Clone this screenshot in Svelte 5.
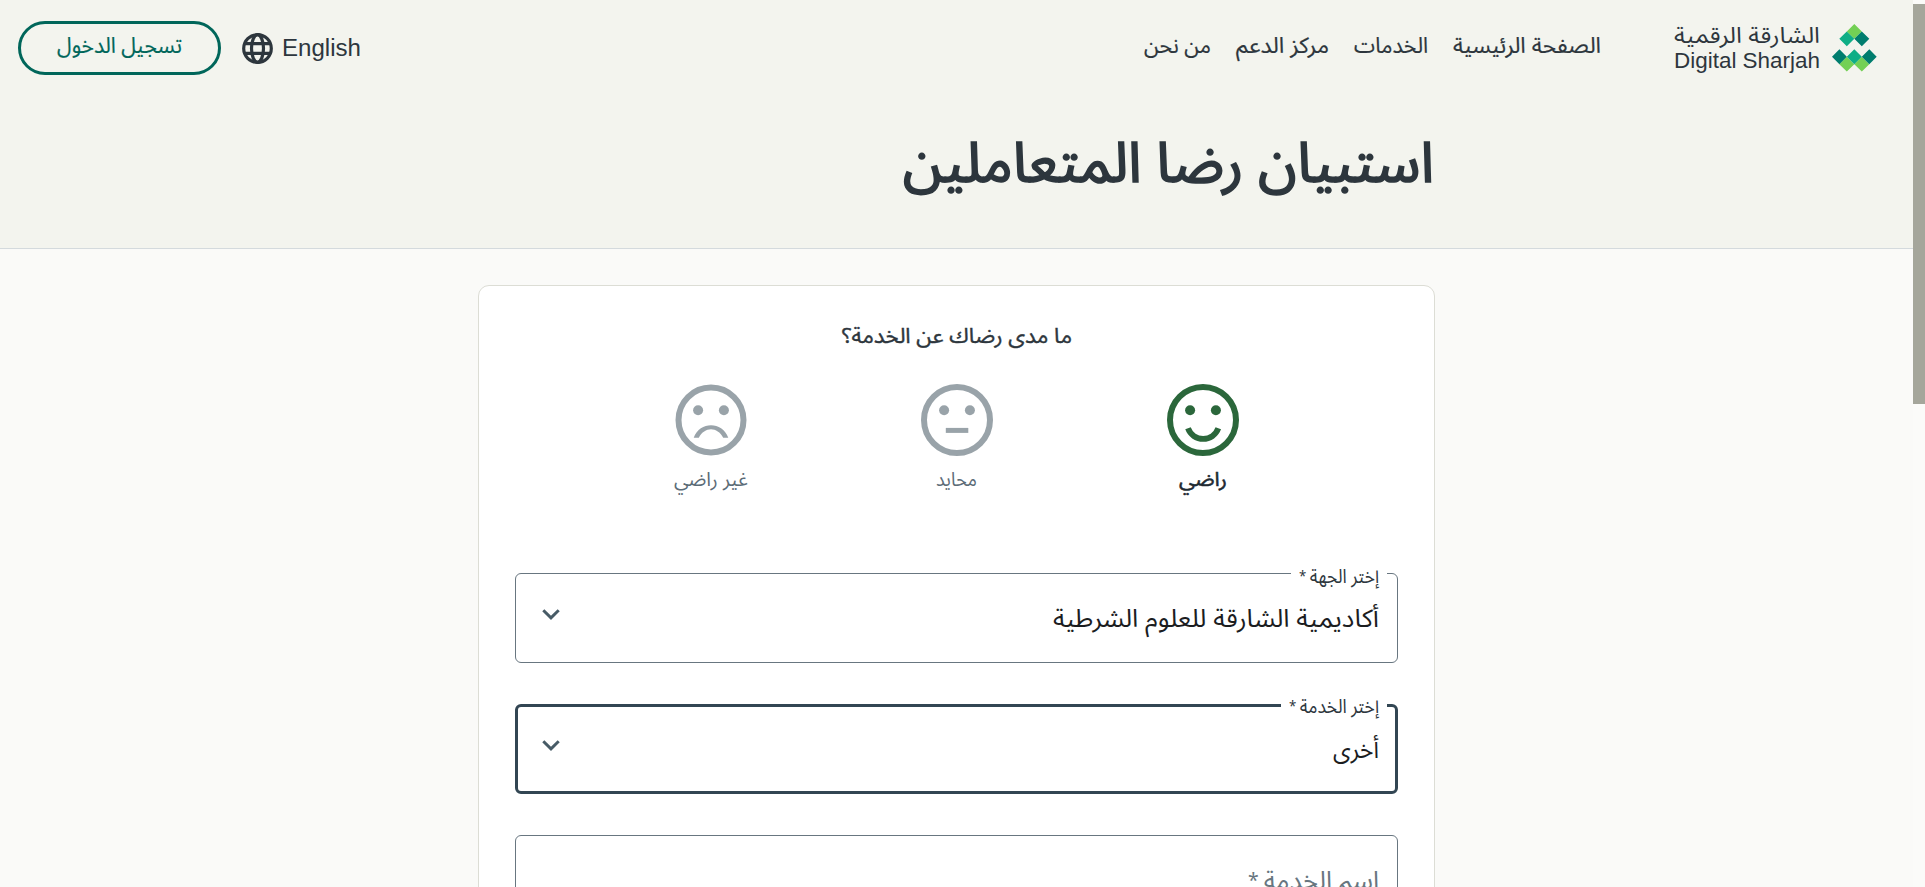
<script>
  const nav = [
    { label: 'من نحن', width: 67 },
    { label: 'مركز الدعم', width: 93 },
    { label: 'الخدمات', width: 74 },
    { label: 'الصفحة الرئيسية', width: 148 }
  ];
  const moods = [
    { id: 'sad', label: 'غير راضي', width: 74 },
    { id: 'neutral', label: 'محايد', width: 41 },
    { id: 'happy', label: 'راضي', width: 48 }
  ];
  const fields = [
    { label: 'إختر الجهة', labelWidth: 80, value: 'أكاديمية الشارقة للعلوم الشرطية', valueWidth: 326, select: true },
    { label: 'إختر الخدمة', labelWidth: 90, value: 'أخرى', valueWidth: 46, select: true, focused: true },
    { placeholder: 'اسم الخدمة', valueWidth: 131 }
  ];
</script>

{#snippet fitted(text, width, height, baseline, kind, dir = 'rtl', required = false)}
  <svg class="fitted {kind}" {width} {height} direction={dir}>
    <text x={width / 2} y={baseline} text-anchor="middle" textLength={width} lengthAdjust="spacingAndGlyphs">{text}{#if required}<tspan class="star" dy="-2">{' *'}</tspan>{/if}</text>
  </svg>
{/snippet}

<div class="window">
  <div class="page">
    <header>
      <div class="bar">
        <button class="login">{@render fitted('تسجيل الدخول', 125, 48, 29, 'nav-text')}</button>
        <a class="language" href="#en">
          <svg width="31" height="31" viewBox="0 0 31 31" fill="none" stroke="#2d363d" stroke-width="3.2">
            <circle cx="15.5" cy="15.5" r="13.8" />
            <ellipse cx="15.5" cy="15.5" rx="6" ry="13.8" />
            <path d="M2.5 10.6h26M2.5 20.4h26" />
          </svg>
          {@render fitted('English', 79, 54, 35, 'latin', 'ltr')}
        </a>
        <nav>
          {#each nav as item}
            <a href="#nav">{@render fitted(item.label, item.width, 54, 32, 'nav-text')}</a>
          {/each}
        </nav>
        <div class="brand">
          <div class="brand-name">
            {@render fitted('الشارقة الرقمية', 146, 25, 21.5, 'brand-ar')}
            {@render fitted('Digital Sharjah', 146, 29, 21.5, 'brand-en', 'ltr')}
          </div>
          <svg width="45" height="48" viewBox="0 0 45 48">
            <path fill="#73d055" d="M22.3 0l7.5 7.5-7.5 7.3-7.5-7.3zM14.8 32.7l7.5 7.5-7.5 7.3-7.5-7.3zM29.8 32.7l7.5 7.5-7.5 7.3-7.5-7.3z" />
            <path fill="#0fae86" d="M14.8 7.5l7.5 7.3-7.5 7.4-7.5-7.4zM22.3 25.2l7.5 7.5-7.5 7.5-7.5-7.5z" />
            <path fill="#007d6e" d="M29.8 7.5l7.5 7.3-7.5 7.4-7.5-7.4zM7.4 25.2l7.4 7.5-7.4 7.5L0 32.7zM37.3 25.2l7.4 7.5-7.4 7.5-7.5-7.5z" />
          </svg>
        </div>
      </div>
      <h1>{@render fitted('استبيان رضا المتعاملين', 531, 152, 86, 'title')}</h1>
    </header>

    <main>
      <h2>{@render fitted('ما مدى رضاك عن الخدمة؟', 230, 98, 56.5, 'question')}</h2>
      <div class="moods">
        {#each moods as mood}
          <div class="mood {mood.id}">
            <svg width="72" height="72" viewBox="-36 -36 72 72" fill="none" stroke="currentColor">
              <circle r={mood.id === 'sad' ? 32.5 : 33} stroke-width="6" />
              <g fill="currentColor" stroke="none">
                <circle cx="-12.9" cy="-9.8" r="5" />
                <circle cx="12.9" cy="-9.8" r="5" />
                {#if mood.id === 'sad'}
                  <path d="M-17.3 17.7C-11 1.2 11 1.2 17.3 17.7H12.2C6.5 6.3-6.5 6.3-12.2 17.7z" />
                {/if}
              </g>
              {#if mood.id === 'happy'}
                <path stroke-width="5.8" d="M-15 8.3A16.1 16.1 0 0 0 15.3 8.3" />
              {:else if mood.id === 'neutral'}
                <path stroke-width="5" d="M-11.2 10.4H11.3" />
              {/if}
            </svg>
            {@render fitted(mood.label, mood.width, 117, 30, 'small')}
          </div>
        {/each}
      </div>
      <div class="fields">
        {#each fields as field}
          <div class="field" class:focused={field.focused}>
            {#if field.label}
              <span class="notch">{@render fitted(field.label, field.labelWidth, 28, 18, 'small', 'rtl', true)}</span>
            {/if}
            {#if field.select}
              <svg class="chevron" width="18" height="11" viewBox="0 0 18 11" fill="none" stroke="#475b66" stroke-width="3">
                <path d="M1.3 1.3L9 8.8l7.7-7.5" />
              </svg>
            {/if}
            {@render fitted(field.value ?? field.placeholder, field.valueWidth, 90, 54, field.value ? 'value' : 'placeholder', 'rtl', !field.value)}
          </div>
        {/each}
      </div>
    </main>
  </div>
  <div class="scroll"><div class="thumb"></div></div>
</div>

<style>
  :global(body) { margin: 0; overflow: hidden; }
  .window {
    display: flex; height: 887px; overflow: hidden; background: #fafaf8; color: #2d363d;
    font-family: "Noto Sans Arabic", "DejaVu Sans", sans-serif;
  }
  .page { flex: 1; min-width: 0; }
  svg { display: block; flex: none; }
  .fitted { overflow: visible; fill: currentColor; }
  header { background: #f3f4ee; border-bottom: 1px solid #d4dadd; height: 248px; }
  .bar { display: flex; align-items: center; height: 96px; padding: 0 36px 0 18px; }
  a { color: inherit; text-decoration: none; }
  .login {
    box-sizing: border-box; width: 203px; height: 54px; padding: 0; display: flex; justify-content: center;
    border: 3px solid #00665a; border-radius: 27px; background: none; color: #00665a; font-family: inherit;
  }
  .language { display: flex; align-items: center; gap: 9px; margin-left: 21px; }
  nav { display: flex; gap: 25px; margin-left: auto; }
  .brand { display: flex; align-items: center; gap: 12.5px; margin-left: 73px; }
  .nav-text { font-size: 22px; stroke: currentColor; stroke-width: 0.2px; }
  .latin { font: 23px "Liberation Sans", Arial, sans-serif; }
  .brand-ar { font-size: 22px; }
  .brand-en { font: 21.5px "Liberation Sans", Arial, sans-serif; }
  h1, h2 { margin: 0; font-weight: 400; }
  h1 { width: 957px; margin: 0 auto; display: flex; justify-content: flex-end; box-sizing: border-box; padding-right: 1px; }
  .title { font-size: 56px; stroke: currentColor; stroke-width: 1.7px; }
  main {
    box-sizing: border-box; width: 957px; height: 760px; margin: 36px auto 0; padding: 0 36px;
    background: #fff; border: 1px solid #dcddd5; border-radius: 11px;
  }
  h2 { display: flex; justify-content: center; }
  .question { font-size: 21px; stroke: currentColor; stroke-width: 0.4px; }
  .moods { display: flex; justify-content: center; gap: 126px; }
  .mood { width: 120px; display: flex; flex-direction: column; align-items: center; color: #99a3a9; }
  .mood .fitted { color: #5c6c77; }
  .mood.happy { color: #2b673b; }
  .mood.happy .fitted { color: #202a32; stroke: currentColor; stroke-width: 0.5px; }
  .small { font-size: 19.5px; }
  .fields { display: flex; flex-direction: column; gap: 41px; }
  .field {
    position: relative; box-sizing: border-box; height: 90px; border: 1px solid #687680; border-radius: 6px;
    display: flex; align-items: center; justify-content: space-between; padding: 0 18px 0 26px;
  }
  .field.focused { border: 3px solid #324653; padding: 0 16px 0 24px; }
  .field > .fitted:last-child { margin-left: auto; }
  .chevron { margin-bottom: 7px; }
  .notch { position: absolute; top: -9px; right: 10px; padding: 0 8px; background: #fff; }
  .focused .notch { top: -12px; right: 8px; }
  .star { font-size: 0.76em; }
  .value { font-size: 25px; color: #1b1d1f; }
  .placeholder { font-size: 25px; color: #687680; }
  .scroll { width: 12px; padding-top: 4px; background: #fbfbf9; }
  .thumb { height: 400px; background: #a5a69b; }
</style>
